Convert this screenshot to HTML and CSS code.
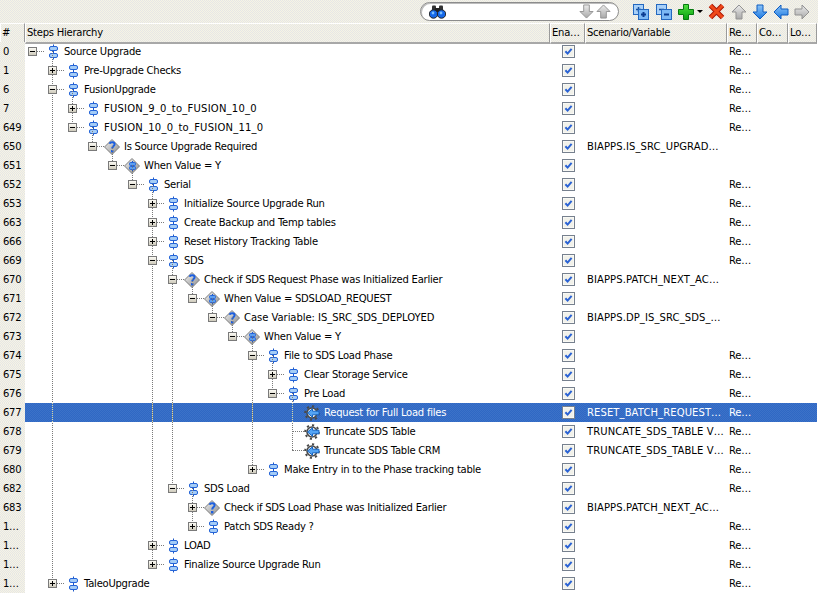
FILE: index.html
```html
<!DOCTYPE html>
<html lang="en">
<head>
<meta charset="utf-8">
<title>Steps Hierarchy</title>
<link rel="stylesheet" href="styles.css">
</head>
<body>
<svg class="defs" width="0" height="0">
  <defs>
    <linearGradient id="gBlue" x1="0" y1="0" x2="0" y2="1"><stop offset="0" stop-color="#8cc4f8"/><stop offset="1" stop-color="#1c78e0"/></linearGradient>
    <linearGradient id="gGrey" x1="0" y1="0" x2="0" y2="1"><stop offset="0" stop-color="#ececec"/><stop offset="1" stop-color="#a8a8a8"/></linearGradient>
    <linearGradient id="gGreen" x1="0" y1="0" x2="0" y2="1"><stop offset="0" stop-color="#50e040"/><stop offset="1" stop-color="#08a010"/></linearGradient>
    <linearGradient id="gDia" x1="0" y1="0" x2="1" y2="1"><stop offset="0" stop-color="#f4f4f4"/><stop offset="1" stop-color="#8a8a8a"/></linearGradient>
    <symbol id="step" viewBox="0 0 16 16">
      <path d="M9.5 0.5v15" stroke="#1b57c8" fill="none"/>
      <rect x="5.5" y="2.5" width="8" height="4" rx="1.5" fill="#a4ccf6" stroke="#2464d8"/>
      <rect x="5.5" y="9.5" width="8" height="4" rx="1.5" fill="#a4ccf6" stroke="#2464d8"/>
    </symbol>
    <symbol id="ask" viewBox="0 0 16 16">
      <path d="M8 0.5L15.5 8 8 15.5 0.5 8z" fill="url(#gDia)" stroke="#7c7c7c"/>
      <path d="M5.6 4.8C6.2 2.6 10.6 2.7 10.6 5.2 10.6 7 8.2 7.2 8.2 9.6" fill="none" stroke="#1c5fe0" stroke-width="2"/>
      <rect x="7" y="11" width="2.4" height="2.4" fill="#1c5fe0"/>
    </symbol>
    <symbol id="when" viewBox="0 0 16 16">
      <path d="M8 0.5L15.5 8 8 15.5 0.5 8z" fill="url(#gDia)" stroke="#7c7c7c"/>
      <path d="M8.5 3v10" stroke="#1b57c8"/>
      <rect x="5.5" y="4.5" width="6" height="3" rx="1" fill="#5c9ef0" stroke="#2464d8"/>
      <rect x="5.5" y="8.5" width="6" height="3" rx="1" fill="#5c9ef0" stroke="#2464d8"/>
    </symbol>
    <symbol id="gear" viewBox="0 0 16 16">
      <circle cx="8" cy="8" r="5" fill="#f4f4f4" stroke="#4a4a4a" stroke-width="1.6"/>
      <circle cx="8" cy="8" r="6.8" fill="none" stroke="#4a4a4a" stroke-width="2" stroke-dasharray="2.2 3.1"/>
      <path d="M3.5 8L8.5 3.8V6.2H15V9.8H8.5V12.2z" fill="#54a4f4" stroke="#1464c4"/>
    </symbol>
    <symbol id="chk" viewBox="0 0 13 13">
      <rect x="0.5" y="0.5" width="12" height="12" fill="#fff" stroke="#76808e"/>
      <rect x="1.5" y="1.5" width="10" height="10" fill="#f1f1ea"/>
      <path d="M3.4 6.2L5.6 8.6 9.6 3.8" fill="none" stroke="#2a62d4" stroke-width="2"/>
    </symbol>
    <symbol id="up" viewBox="0 0 16 16"><path d="M8 1L15 8H11V15H5V8H1z"/></symbol>
    <symbol id="down" viewBox="0 0 16 16"><path d="M8 15L15 8H11V1H5V8H1z"/></symbol>
    <symbol id="left" viewBox="0 0 16 16"><path d="M1 8L8 1V5H15V11H8V15z"/></symbol>
    <symbol id="right" viewBox="0 0 16 16"><path d="M15 8L8 1V5H1V11H8V15z"/></symbol>
  </defs>
</svg>

<div class="toolbar">
  <div class="search">
    <svg class="binoc" width="17" height="14" viewBox="0 0 17 14">
      <rect x="3" y="0.5" width="4" height="5" rx="1" fill="#333"/><rect x="10" y="0.5" width="4" height="5" rx="1" fill="#333"/>
      <rect x="6" y="3" width="5" height="4" fill="#222"/>
      <circle cx="4.5" cy="9" r="4.2" fill="#1668e8" stroke="#222"/><circle cx="12.5" cy="9" r="4.2" fill="#1668e8" stroke="#222"/>
      <circle cx="4" cy="8" r="1.4" fill="#7cc0ff"/><circle cx="12" cy="8" r="1.4" fill="#7cc0ff"/>
    </svg>
    <svg class="arrow off gapS" width="15" height="15"><use href="#down"/></svg>
    <svg class="arrow off" width="15" height="15"><use href="#up"/></svg>
  </div>
  <svg class="tb tbFirst" width="18" height="18" viewBox="0 0 18 18">
    <rect x="1.5" y="1.5" width="10" height="10" fill="#a8d0f8" stroke="#2468c0"/><path d="M4 6.5h5M6.5 4v5" stroke="#1850a0" stroke-width="1.5"/>
    <rect x="6.5" y="6.5" width="10" height="10" fill="#7cb8f4" stroke="#2468c0"/><path d="M9 11.5h5M11.5 9v5" stroke="#0c3c90" stroke-width="2"/>
  </svg>
  <svg class="tb" width="18" height="18" viewBox="0 0 18 18">
    <rect x="1.5" y="1.5" width="10" height="10" fill="#a8d0f8" stroke="#2468c0"/><path d="M4 6.5h5" stroke="#1850a0" stroke-width="1.5"/>
    <rect x="6.5" y="6.5" width="10" height="10" fill="#7cb8f4" stroke="#2468c0"/><path d="M9 11.5h5" stroke="#0c3c90" stroke-width="2"/>
  </svg>
  <svg class="tb" width="16" height="16" viewBox="0 0 16 16"><path d="M5.5 0.5h5v5h5v5h-5v5h-5v-5h-5v-5h5z" fill="url(#gGreen)" stroke="#067a10"/></svg>
  <span class="caret"></span>
  <svg class="tb tbX" width="17" height="17" viewBox="0 0 17 17"><path d="M2.5 2.5L14.5 14.5M14.5 2.5L2.5 14.5" stroke="#a81808" stroke-width="5"/><path d="M2.5 2.5L14.5 14.5M14.5 2.5L2.5 14.5" stroke="#f04818" stroke-width="3"/></svg>
  <svg class="arrow off tb" width="16" height="16"><use href="#up"/></svg>
  <svg class="arrow on tb" width="16" height="16"><use href="#down"/></svg>
  <svg class="arrow on tb" width="16" height="16"><use href="#left"/></svg>
  <svg class="arrow off tb" width="16" height="16"><use href="#right"/></svg>
</div>

<div class="row head">
  <span class="hcell">#</span><span class="hcell">Steps Hierarchy</span><span class="hcell">Ena…</span><span class="hcell">Scenario/Variable</span><span class="hcell">Re…</span><span class="hcell">Co…</span><span class="hcell">Lo…</span>
</div>

<div class="body">
  <svg class="guides" width="817" height="551" viewBox="0 0 817 551">
    <path class="guide" d="M52.5 9V541M72.5 47V85M92.5 85V104M112.5 104V123M132.5 123V142M152.5 142V522M172.5 218V446M192.5 237V256M192.5 446V484M212.5 256V275M232.5 275V294M252.5 294V427M272.5 313V351M292.5 351V408"/>
    <path class="guide pale" d="M52.5 361V380M152.5 361V380M172.5 361V380M252.5 361V380M292.5 361V380"/>
  </svg>

  <div class="row"><span class="num">0</span><span class="tree d0"><i class="box"></i><i class="conn"></i><svg class="ico"><use href="#step"/></svg>Source Upgrade</span><span class="en"><svg class="chk"><use href="#chk"/></svg></span><span class="scn"></span><span class="re">Re…</span><span></span><span></span></div>
  <div class="row"><span class="num">1</span><span class="tree d1"><i class="box plus"></i><i class="conn"></i><svg class="ico"><use href="#step"/></svg>Pre-Upgrade Checks</span><span class="en"><svg class="chk"><use href="#chk"/></svg></span><span class="scn"></span><span class="re">Re…</span><span></span><span></span></div>
  <div class="row"><span class="num">6</span><span class="tree d1"><i class="box"></i><i class="conn"></i><svg class="ico"><use href="#step"/></svg>FusionUpgrade</span><span class="en"><svg class="chk"><use href="#chk"/></svg></span><span class="scn"></span><span class="re">Re…</span><span></span><span></span></div>
  <div class="row"><span class="num">7</span><span class="tree d2 caps"><i class="box plus"></i><i class="conn"></i><svg class="ico"><use href="#step"/></svg>FUSION_9_0_to_FUSION_10_0</span><span class="en"><svg class="chk"><use href="#chk"/></svg></span><span class="scn"></span><span class="re">Re…</span><span></span><span></span></div>
  <div class="row"><span class="num">649</span><span class="tree d2 caps"><i class="box"></i><i class="conn"></i><svg class="ico"><use href="#step"/></svg>FUSION_10_0_to_FUSION_11_0</span><span class="en"><svg class="chk"><use href="#chk"/></svg></span><span class="scn"></span><span class="re">Re…</span><span></span><span></span></div>
  <div class="row"><span class="num">650</span><span class="tree d3"><i class="box"></i><i class="conn"></i><svg class="ico"><use href="#ask"/></svg>Is Source Upgrade Required</span><span class="en"><svg class="chk"><use href="#chk"/></svg></span><span class="scn">BIAPPS.IS_SRC_UPGRAD…</span><span class="re"></span><span></span><span></span></div>
  <div class="row"><span class="num">651</span><span class="tree d4"><i class="box"></i><i class="conn"></i><svg class="ico"><use href="#when"/></svg>When Value = Y</span><span class="en"><svg class="chk"><use href="#chk"/></svg></span><span class="scn"></span><span class="re"></span><span></span><span></span></div>
  <div class="row"><span class="num">652</span><span class="tree d5"><i class="box"></i><i class="conn"></i><svg class="ico"><use href="#step"/></svg>Serial</span><span class="en"><svg class="chk"><use href="#chk"/></svg></span><span class="scn"></span><span class="re">Re…</span><span></span><span></span></div>
  <div class="row"><span class="num">653</span><span class="tree d6"><i class="box plus"></i><i class="conn"></i><svg class="ico"><use href="#step"/></svg>Initialize Source Upgrade Run</span><span class="en"><svg class="chk"><use href="#chk"/></svg></span><span class="scn"></span><span class="re">Re…</span><span></span><span></span></div>
  <div class="row"><span class="num">663</span><span class="tree d6"><i class="box plus"></i><i class="conn"></i><svg class="ico"><use href="#step"/></svg>Create Backup and Temp tables</span><span class="en"><svg class="chk"><use href="#chk"/></svg></span><span class="scn"></span><span class="re">Re…</span><span></span><span></span></div>
  <div class="row"><span class="num">666</span><span class="tree d6"><i class="box plus"></i><i class="conn"></i><svg class="ico"><use href="#step"/></svg>Reset History Tracking Table</span><span class="en"><svg class="chk"><use href="#chk"/></svg></span><span class="scn"></span><span class="re">Re…</span><span></span><span></span></div>
  <div class="row"><span class="num">669</span><span class="tree d6"><i class="box"></i><i class="conn"></i><svg class="ico"><use href="#step"/></svg>SDS</span><span class="en"><svg class="chk"><use href="#chk"/></svg></span><span class="scn"></span><span class="re">Re…</span><span></span><span></span></div>
  <div class="row"><span class="num">670</span><span class="tree d7"><i class="box"></i><i class="conn"></i><svg class="ico"><use href="#ask"/></svg>Check if SDS Request Phase was Initialized Earlier</span><span class="en"><svg class="chk"><use href="#chk"/></svg></span><span class="scn">BIAPPS.PATCH_NEXT_AC…</span><span class="re"></span><span></span><span></span></div>
  <div class="row"><span class="num">671</span><span class="tree d8"><i class="box"></i><i class="conn"></i><svg class="ico"><use href="#when"/></svg>When Value = SDSLOAD_REQUEST</span><span class="en"><svg class="chk"><use href="#chk"/></svg></span><span class="scn"></span><span class="re"></span><span></span><span></span></div>
  <div class="row"><span class="num">672</span><span class="tree d9 mixed"><i class="box"></i><i class="conn"></i><svg class="ico"><use href="#ask"/></svg>Case Variable: IS_SRC_SDS_DEPLOYED</span><span class="en"><svg class="chk"><use href="#chk"/></svg></span><span class="scn">BIAPPS.DP_IS_SRC_SDS_…</span><span class="re"></span><span></span><span></span></div>
  <div class="row"><span class="num">673</span><span class="tree d10"><i class="box"></i><i class="conn"></i><svg class="ico"><use href="#when"/></svg>When Value = Y</span><span class="en"><svg class="chk"><use href="#chk"/></svg></span><span class="scn"></span><span class="re"></span><span></span><span></span></div>
  <div class="row"><span class="num">674</span><span class="tree d11"><i class="box"></i><i class="conn"></i><svg class="ico"><use href="#step"/></svg>File to SDS Load Phase</span><span class="en"><svg class="chk"><use href="#chk"/></svg></span><span class="scn"></span><span class="re">Re…</span><span></span><span></span></div>
  <div class="row"><span class="num">675</span><span class="tree d12"><i class="box plus"></i><i class="conn"></i><svg class="ico"><use href="#step"/></svg>Clear Storage Service</span><span class="en"><svg class="chk"><use href="#chk"/></svg></span><span class="scn"></span><span class="re">Re…</span><span></span><span></span></div>
  <div class="row"><span class="num">676</span><span class="tree d12"><i class="box"></i><i class="conn"></i><svg class="ico"><use href="#step"/></svg>Pre Load</span><span class="en"><svg class="chk"><use href="#chk"/></svg></span><span class="scn"></span><span class="re">Re…</span><span></span><span></span></div>
  <div class="row sel"><span class="num">677</span><span class="tree d13"><i class="conn leaf"></i><svg class="ico"><use href="#gear"/></svg>Request for Full Load files</span><span class="en"><svg class="chk"><use href="#chk"/></svg></span><span class="scn">RESET_BATCH_REQUEST…</span><span class="re">Re…</span><span></span><span></span></div>
  <div class="row"><span class="num">678</span><span class="tree d13"><i class="conn leaf"></i><svg class="ico"><use href="#gear"/></svg>Truncate SDS Table</span><span class="en"><svg class="chk"><use href="#chk"/></svg></span><span class="scn">TRUNCATE_SDS_TABLE V…</span><span class="re">Re…</span><span></span><span></span></div>
  <div class="row"><span class="num">679</span><span class="tree d13"><i class="conn leaf"></i><svg class="ico"><use href="#gear"/></svg>Truncate SDS Table CRM</span><span class="en"><svg class="chk"><use href="#chk"/></svg></span><span class="scn">TRUNCATE_SDS_TABLE V…</span><span class="re">Re…</span><span></span><span></span></div>
  <div class="row"><span class="num">680</span><span class="tree d11"><i class="box plus"></i><i class="conn"></i><svg class="ico"><use href="#step"/></svg>Make Entry in to the Phase tracking table</span><span class="en"><svg class="chk"><use href="#chk"/></svg></span><span class="scn"></span><span class="re">Re…</span><span></span><span></span></div>
  <div class="row"><span class="num">682</span><span class="tree d7"><i class="box"></i><i class="conn"></i><svg class="ico"><use href="#step"/></svg>SDS Load</span><span class="en"><svg class="chk"><use href="#chk"/></svg></span><span class="scn"></span><span class="re">Re…</span><span></span><span></span></div>
  <div class="row"><span class="num">683</span><span class="tree d8"><i class="box plus"></i><i class="conn"></i><svg class="ico"><use href="#ask"/></svg>Check if SDS Load Phase was Initialized Earlier</span><span class="en"><svg class="chk"><use href="#chk"/></svg></span><span class="scn">BIAPPS.PATCH_NEXT_AC…</span><span class="re"></span><span></span><span></span></div>
  <div class="row"><span class="num">1…</span><span class="tree d8"><i class="box plus"></i><i class="conn"></i><svg class="ico"><use href="#step"/></svg>Patch SDS Ready ?</span><span class="en"><svg class="chk"><use href="#chk"/></svg></span><span class="scn"></span><span class="re">Re…</span><span></span><span></span></div>
  <div class="row"><span class="num">1…</span><span class="tree d6"><i class="box plus"></i><i class="conn"></i><svg class="ico"><use href="#step"/></svg>LOAD</span><span class="en"><svg class="chk"><use href="#chk"/></svg></span><span class="scn"></span><span class="re">Re…</span><span></span><span></span></div>
  <div class="row"><span class="num">1…</span><span class="tree d6"><i class="box plus"></i><i class="conn"></i><svg class="ico"><use href="#step"/></svg>Finalize Source Upgrade Run</span><span class="en"><svg class="chk"><use href="#chk"/></svg></span><span class="scn"></span><span class="re">Re…</span><span></span><span></span></div>
  <div class="row"><span class="num">1…</span><span class="tree d1"><i class="box plus"></i><i class="conn"></i><svg class="ico"><use href="#step"/></svg>TaleoUpgrade</span><span class="en"><svg class="chk"><use href="#chk"/></svg></span><span class="scn"></span><span class="re">Re…</span><span></span><span></span></div>
</div>
```

FILE: styles.css
```css
* { box-sizing: border-box; }

html, body { margin: 0; padding: 0; background: #fff; }

body {
  width: 820px;
  height: 601px;
  overflow: hidden;
  font-family: "DejaVu Sans", sans-serif;
  font-size: 10px;
  letter-spacing: -0.24px;
  color: #000;
}

.defs { position: absolute; }

.toolbar, .hcell, .num {
  background-color: #ece9e0;
  background-image: conic-gradient(#f6f4e4 25%, #e6e6e6 0 50%, #f6f4e4 0 75%, #e6e6e6 0);
  background-size: 2px 2px;
}

.toolbar {
  display: flex;
  align-items: center;
  width: 818px;
  height: 23px;
  padding-left: 420px;
}

.search {
  display: flex;
  align-items: center;
  width: 199px;
  height: 19px;
  padding: 0 7px 0 8px;
  background: #fff;
  border: 1px solid #8c8c8c;
  border-radius: 10px;
  box-shadow: inset 1px 1px 0 #bdbdbd;
}

.binoc { flex: none; }
.gapS { margin-left: auto; margin-right: 2px; }
.arrow { flex: none; }
.arrow.off { fill: url(#gGrey); stroke: #929292; }
.arrow.on { fill: url(#gBlue); stroke: #0f5cc0; }

.tb { flex: none; margin-left: 5px; }
.tbFirst { margin-left: 13px; }
.tbX { margin-left: 5px; }
.tbX + .tb { margin-left: 6px; }

.caret {
  flex: none;
  width: 0;
  height: 0;
  margin-left: 3px;
  border: 3px solid transparent;
  border-top: 3px solid #000;
  border-bottom: 0;
}

.row {
  display: grid;
  grid-template-columns: 25px 525px 35px 142px 30px 31px 29px;
  width: 817px;
  height: 19px;
  line-height: 19px;
  white-space: nowrap;
}

.head { height: 19px; line-height: 18px; }

.hcell {
  padding-left: 1px;
  border-top: 1px solid #fff;
  border-left: 1px solid #fff;
  border-right: 1px solid #9a9a9a;
  border-bottom: 2px solid #a8a8a8;
}

.body { position: relative; }

.guides {
  position: absolute;
  left: 0;
  top: 0;
  z-index: 1;
  pointer-events: none;
}

.guide {
  fill: none;
  stroke: #7a7a7a;
  stroke-dasharray: 1 1;
}

.guide.pale { stroke: #d6d6a4; }

.num { padding-left: 3px; }

.tree {
  display: flex;
  align-items: center;
  padding-left: 3px;
}

.caps { letter-spacing: 0.22px; }
.mixed { letter-spacing: -0.04px; }

.d1 { padding-left: 23px; }
.d2 { padding-left: 43px; }
.d3 { padding-left: 63px; }
.d4 { padding-left: 83px; }
.d5 { padding-left: 103px; }
.d6 { padding-left: 123px; }
.d7 { padding-left: 143px; }
.d8 { padding-left: 163px; }
.d9 { padding-left: 183px; }
.d10 { padding-left: 203px; }
.d11 { padding-left: 223px; }
.d12 { padding-left: 243px; }
.d13 { padding-left: 263px; }

.box {
  position: relative;
  z-index: 2;
  flex: none;
  width: 9px;
  height: 9px;
  background: linear-gradient(#fbfaf4, #cfcbbc);
  border: 1px solid #7a7a7a;
}

.box::before {
  content: "";
  position: absolute;
  left: 1px;
  top: 3px;
  width: 5px;
  height: 1px;
  background: #000;
}

.box.plus::after {
  content: "";
  position: absolute;
  left: 3px;
  top: 1px;
  width: 1px;
  height: 5px;
  background: #000;
}

.conn {
  flex: none;
  width: 7px;
  height: 0;
  border-top: 1px dotted #7a7a7a;
}

.conn.leaf { width: 12px; margin-left: 4px; }
.sel .conn { border-top-color: transparent; }

.ico {
  flex: none;
  width: 16px;
  height: 16px;
  margin-right: 4px;
}

.en {
  display: flex;
  align-items: center;
  justify-content: center;
  padding-left: 1px;
}

.chk { width: 13px; height: 13px; }

.scn { padding-left: 2px; letter-spacing: 0.1px; }
.re { padding-left: 2px; }

.sel > :not(.num) {
  color: #fff;
  background-color: #316ac5;
  background-image: conic-gradient(#2f68c4 25%, #3c72c8 0 50%, #2f68c4 0 75%, #3c72c8 0);
  background-size: 2px 2px;
}
```
